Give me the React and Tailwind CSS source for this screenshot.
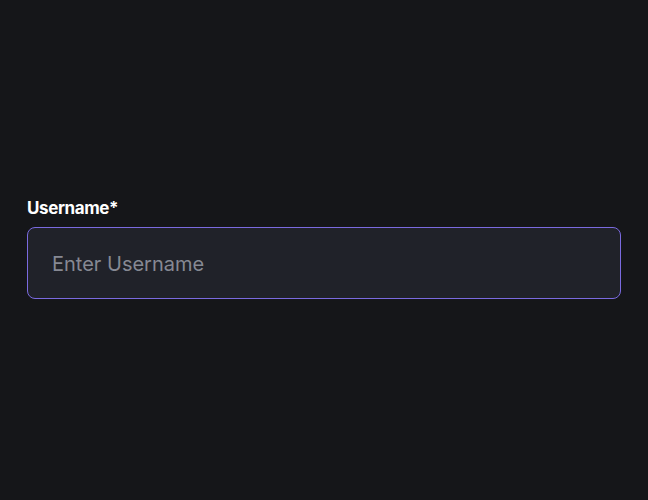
import React, { useState } from "react";

export default function App() {
  const [username, setUsername] = useState("");

  return (
    <div
      className="w-full h-[500px] bg-[#151619] flex flex-col justify-center px-[27px]"
      style={{ fontFamily: "Inter, 'Noto Sans', sans-serif" }}
    >
      <div className="-mt-[3px]">
        <label className="block text-[17px] font-bold text-white tracking-[-0.4px] leading-[20px] mb-[9px]">
          Username*
        </label>
        <input
          type="text"
          value={username}
          onChange={(e) => setUsername(e.target.value)}
          placeholder="Enter Username"
          className="w-full h-[72px] bg-[#202229] border border-[#7a6adf] rounded-[8px] px-[24px] pt-[2px] text-[20px] text-white placeholder:text-[#868993] focus:outline-none"
        />
      </div>
    </div>
  );
}
